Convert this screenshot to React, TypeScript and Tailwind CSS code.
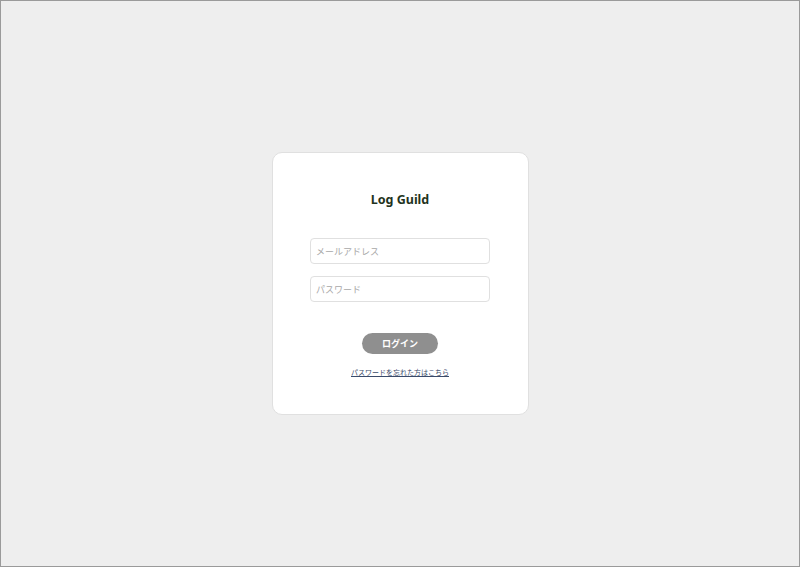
import React from "react";

export default function App() {
  return (
    <div
      className="h-screen w-full border border-[#9a9a9a] bg-[#eeeeee] flex items-center justify-center"
      style={{ fontFamily: '"Noto Sans CJK JP", "Noto Sans", sans-serif' }}
    >
      <div className="w-[257px] rounded-[10px] border border-[#e0e0e0] bg-white pt-[37px] pb-[36px] flex flex-col items-center">
        <h1
          className="h-[20px] leading-[20px] text-[12.5px] font-bold text-[#1f3320]"
          style={{ fontFamily: '"Noto Sans", sans-serif' }}
        >
          Log Guild
        </h1>
        <input
          className="mt-[28px] w-[180px] h-[26px] rounded-[4px] border border-[#e0e0e0] px-[5px] text-[9px] placeholder:text-[#a8a8a8] outline-none"
          placeholder="メールアドレス"
        />
        <input
          type="password"
          className="mt-[12px] w-[180px] h-[26px] rounded-[4px] border border-[#e0e0e0] px-[5px] text-[9px] placeholder:text-[#a8a8a8] outline-none"
          placeholder="パスワード"
        />
        <button className="mt-[31px] w-[76px] h-[21px] rounded-full bg-[#8f8f8f] text-white text-[9px] font-bold leading-none">
          ログイン
        </button>
        <a href="#" className="mt-[12px] h-[12px] leading-[12px] text-[7px] text-[#3a4a6a] underline">
          パスワードを忘れた方はこちら
        </a>
      </div>
    </div>
  );
}
